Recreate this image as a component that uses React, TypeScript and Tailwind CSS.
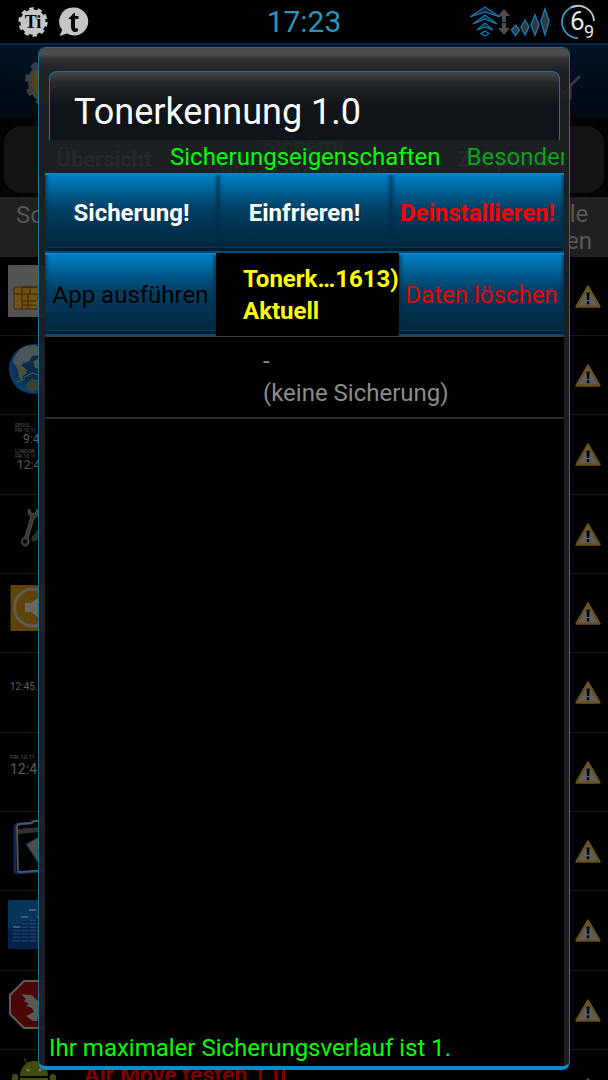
import type { ReactNode } from "react";
import { clsx } from "clsx";

function TitaniumIcon() {
    return (
        <svg className="w-[30px] h-[30px]" viewBox="0 0 30 30">
            <circle cx="15" cy="15" r="12.6" fill="#c3c5c6" />
            <circle cx="15" cy="15" r="13" fill="none" stroke="#c3c5c6" strokeWidth="3.400" strokeDasharray="4.4 3.768" />
            <text x="15" y="21" textAnchor="middle" fontFamily="Liberation Serif, serif" fontWeight="bold" fontSize="18" fill="#050505">Ti</text>
        </svg>
    )
}

function ChatIcon() {
    return (
        <svg className="w-[30px] h-[30px]" viewBox="0 0 30 30">
            <path d="M15 .5a14 14 0 1 1-7 26L.5 29l2.6-6A14 14 0 0 1 15 .5Z" fill="#c3c5c6" />
            <path d="m15 6-6 6h3v8c0 5 4.500 6 7 4v-3c-2 1-3 .5-3-1v-8h3.500V9H16V6Z" fill="#050505" />
        </svg>
    )
}

function WifiIcon() {
    return (
        <svg className="w-[42px] h-[32px]" viewBox="0 0 42 32" fill="none" stroke="#1878ad" strokeWidth="1.300">
            <path d="M2 11 17 1l15 10-15-5Z" fill="#123" />
            <path d="M5 18 17 9l12 9-12-5Z" fill="#123" />
            <path d="M9 24l8-7 8 7-8-3Z" fill="#123" />
            <path d="m17 25 4 2.500-4 2.500-4-2.500Z" />
            <path d="m36 3 6 7h-4v6h-4v-6h-4Zm0 26 6-7h-4v-5h-4v5h-4Z" fill="#4b4d4f" stroke="none" />
        </svg>
    )
}

function SignalIcon() {
    return (
        <svg className="w-10 h-[30px]" viewBox="0 0 40 30" fill="#34383b" stroke="#1878ad" strokeWidth="1.400">
            <path d="m5.500 18 4 5-4 5.500-4-5.500Z" />
            <path d="m15 13 4 7-4 8-4-8Z" />
            <path d="m25 8 4 10-4 10-4-10Z" />
            <path d="m35 2 4 12-4 14-4-14Z" />
        </svg>
    )
}

function BatteryRing() {
    return (
        <div className="relative w-9 h-9 text-[#e6e6e6] leading-none">
            <svg className="w-9 h-9" viewBox="0 0 36 36" fill="none" strokeWidth="1.800">
                <path d="M18 34A16 16 0 0 1 18 2" stroke="#2b9cc9" />
                <path d="M11 3.500A16 16 0 0 1 34 17" stroke="#b9c6cc" />
            </svg>
            <span className="absolute left-[10px] top-[5px] text-[26px] leading-6">6</span>
            <span className="absolute left-[24px] top-[18px] text-lg leading-5">9</span>
        </div>
    )
}

function StatusBar() {
    return (
        <header className="grid grid-cols-3 items-center h-[43px] px-3 bg-black">
            <div className="flex gap-[11px] pl-[6px]">
                <TitaniumIcon />
                <ChatIcon />
            </div>
            <time className="text-center text-[30px] leading-9 text-[#2d93bd]">17:23</time>
            <div className="flex items-center justify-end">
                <WifiIcon />
                <SignalIcon />
                <span className="w-[10px]"></span>
                <BatteryRing />
            </div>
        </header>
    )
}

function WarningIcon() {
    return (
        <svg className="w-[26px] h-[23px]" viewBox="0 0 26 23">
            <path d="M13 1.500 24.500 21.500h-23Z" fill="#5e5e5e" stroke="#6b5018" strokeWidth="2.400" strokeLinejoin="round" />
            <path d="M11.500 7.500h3.200l-.5 7.500h-2.200ZM11.800 16.200h2.500v3h-2.500Z" fill="#050505" />
        </svg>
    )
}

function SimIcon() {
    return (
        <svg className="w-[50px] h-[52px]" viewBox="0 0 50 52">
            <rect width="46" height="52" rx="1" fill="#535353" />
            <rect x="6" y="22" width="36" height="22" rx="1" fill="#715014" stroke="#3d2c0b" />
            <path d="M14 22v7H7m7-7h15m-15 7h28M20 29v15m-6-15v15m0-8h15m-7-14v7m8 0v7m-16 4h15" stroke="#3d2408" fill="none" />
            <path d="m31 31 3-4 5 1 3 4v12l-7 1-4-4-4-2 3-5Z" fill="#5a5a5a" />
        </svg>
    )
}

function GlobeIcon() {
    return (
        <svg className="w-[50px] h-[50px]" viewBox="0 0 50 50">
            <defs>
                <radialGradient id="globe" cx="0.5" cy="0.45">
                    <stop offset="0.6" stopColor="#0c2a4a" />
                    <stop offset="1" stopColor="#0a3c66" />
                </radialGradient>
            </defs>
            <circle cx="26" cy="25" r="25" fill="url(#globe)" />
            <path d="m7 12 5-7 6-3 9-1 8 4-4 6-7 1-3 5-6 1-3 5-5-2-2-4Z" fill="#4a5558" />
            <path d="m8 22 5-1 5 4 1 4-4 3-1 5-3-3-1-6Z" fill="#47513e" />
            <path d="m25 17 8-3 6 5-4 6-8-1Z" fill="#4d5450" />
            <path d="m18 40 6-5 5 1 6-1-2 10-8 3-6-2Z" fill="#34423a" />
            <path d="m5 18 8 2 7-3m-4 16 9-4 8 3M9 38l8-3" stroke="#4a5a66" fill="none" />
        </svg>
    )
}

function DualClock() {
    return (
        <div className="flex flex-col pl-[7px] w-[46px] text-[#5c5c5c]">
            <span className="text-[5px] leading-[5px]">SEOUL<br />FRI 10.11</span>
            <span className="text-xs leading-3 pl-2">9:45</span>
            <span className="text-[5px] leading-[5px] pt-1">LONDON<br />FRI 10.11</span>
            <span className="text-xs leading-3 pl-[2px]">12:45</span>
        </div>
    )
}

function WrenchIcon() {
    return (
        <svg className="w-[50px] h-[50px]" viewBox="0 0 50 50">
            <path d="M21 6c-2 4 0 6 2 8l-6 20c-4 1-5 8 0 9 4 0 5-5 3-8l6-20c4-1 5-5 3-9l-2 5-4-1Z" fill="#343638" stroke="#555" strokeWidth="1" />
            <circle cx="17" cy="38.500" r="2" fill="#000" />
            <path d="m37 16-10 16c-4 1-4 6-1 6s4-3 3-6l11-14Z" fill="#292b2c" stroke="#3c3c3c" />
        </svg>
    )
}

function SpeakerIcon() {
    return (
        <svg className="w-[50px] h-[50px]" viewBox="0 0 50 50">
            <rect x="2.500" y="3" width="46" height="46" fill="#60430a" />
            <circle cx="25" cy="25.500" r="18.500" fill="none" stroke="#5e5b52" strokeWidth="3" />
            <path d="M17 21h6l8-6v21l-8-6h-6Z" fill="#686662" />
        </svg>
    )
}

function BatteryBoxIcon() {
    return (
        <svg className="w-[50px] h-[54px]" viewBox="0 0 50 54" fill="none">
            <path d="m11 4 12-1 2-3 7 0 2 3 12 1-3 46-33 3c-2 0-3-1-3-3L7 8c0-3 1-4 4-4Z" stroke="#092b62" strokeWidth="3" />
            <path d="m12 4 12-1 2-2h6l2 3 12 1-3 45-31 2c-2 0-2-1-2-3L9 8c0-3 1-4 3-4Z" stroke="#565656" strokeWidth="1.800" />
            <path d="m10 9 34-3v5l-34 3Z" fill="#303030" />
            <path d="m31 17-13 7 13 20 8-4-9-8 1-8Z" fill="#4c4c4c" stroke="#092b62" />
        </svg>
    )
}

const bars = [
    { x: 5, top: 27, n: 6 },
    { x: 13, top: 17, n: 8 },
    { x: 21, top: 10, n: 9 },
    { x: 29, top: 17, n: 8 },
];

function EqualizerIcon() {
    return (
        <svg className="w-[50px] h-[50px]" viewBox="0 0 50 50">
            <rect y="1" width="49" height="49" rx="2" fill="#042349" />
            <path d="M2 1h45a2 2 0 0 1 2 2v16C32 17 14 22 0 30V3a2 2 0 0 1 2-2Z" fill="#06345a" />
            {bars.map((bar) => (
                <g key={bar.x}>
                    <rect x={bar.x} y={bar.top} width="7" height="2" fill="#41616b" />
                    {Array.from({ length: bar.n - 2 }, (_, i) => (
                        <rect key={i} x={bar.x} y={41 - i * 3.4} width="7" height="1.500" fill="#174668" />
                    ))}
                </g>
            ))}
        </svg>
    )
}

function StopBirdIcon() {
    return (
        <svg className="w-[52px] h-[50px]" viewBox="0 0 52 50">
            <path d="M16 2h20l14 14v19L36 49H16L2 35V16Z" fill="#4b0505" stroke="#5d5d5d" strokeWidth="2" />
            <path d="M11 15c5 1 7 0 9 1 5-1 7 4 10 6V8l7 3v14l-6 8-2 9-4 0-7-5 8-4-2-4-6-2 3-2-5-3 2-2-4-4Z" fill="#595959" />
        </svg>
    )
}

function AndroidIcon() {
    return (
        <svg className="w-[52px] h-[50px]" viewBox="0 0 52 50" fill="#414d0c">
            <path d="M12 18a14 15 0 0 1 28 0Z" />
            <path d="m19 6-3-6m17 6 3-6" stroke="#414d0c" />
            <rect x="12" y="20" width="28" height="24" />
            <rect x="4" y="16" width="6" height="20" rx="3" />
            <rect x="42" y="16" width="6" height="20" rx="3" />
            <circle cx="20" cy="12" r="1.500" fill="#777" />
            <circle cx="32" cy="12" r="1.500" fill="#777" />
        </svg>
    )
}

function AppRow({ icon, children }: { icon: ReactNode; children?: ReactNode }) {
    return (
        <li className="flex justify-between items-center h-[79px] nth-[3n]:h-20 pl-2 pr-[7px] border-b border-[#15191a]">
            <div className="self-start pt-2 shrink-0">{icon}</div>
            {children}
            <WarningIcon />
        </li>
    )
}

function BackgroundApp() {
    return (
        <div className="flex flex-col">
            <div className="flex items-center h-[75px] px-6 border-t-2 border-[#04284a] bg-linear-to-b from-[#021426] to-[#010812]">
                <svg className="w-[50px] h-[50px]" viewBox="0 0 50 50">
                    <circle cx="26" cy="25" r="20" fill="#5c450c" stroke="#3d3f40" strokeWidth="4" />
                    <circle cx="26" cy="25" r="23" fill="none" stroke="#3d3f40" strokeWidth="4" strokeDasharray="7 7.450" />
                    <text x="18" y="33" fontFamily="Liberation Serif, serif" fontWeight="bold" fontSize="24" fill="#0a3a5e">Ti</text>
                </svg>
                <span className="grow pl-6 text-3xl text-[#2c2f30]">ALLE (System)</span>
                <svg className="w-10 h-10" viewBox="0 0 40 40" fill="none" stroke="#38393a" strokeWidth="3">
                    <path d="M26 4H2v32h24V24M12 24l7 7 17-17" />
                </svg>
            </div>
            <div className="pt-2 pb-1 px-1 bg-[#030303]">
                <div className="grid grid-cols-3 items-center h-[67px] rounded-[18px] bg-[#131313] text-center text-[22px] font-bold text-[#8a8a8a]">
                    <span>Übersicht</span>
                    <span className="leading-7 text-[#1a8a20]">Sichern/<br />Wiederherstellen</span>
                    <span>Zeitpläne</span>
                </div>
            </div>
            <div className="flex justify-between h-[60px] px-4 bg-[#20211f] text-2xl text-[#575757]">
                <span className="leading-9">Sortieren</span>
                <span className="leading-[27px] pt-1 text-center">Bearbeite alle<br />Anwendungen</span>
            </div>
            <ul>
                <AppRow icon={<SimIcon />} />
                <AppRow icon={<GlobeIcon />} />
                <AppRow icon={<DualClock />} />
                <AppRow icon={<WrenchIcon />} />
                <AppRow icon={<SpeakerIcon />} />
                <AppRow icon={<span className="block pl-[2px] pt-[18px] text-[10px] leading-4 text-[#5c5c5c]">12:45...</span>} />
                <AppRow
                    icon={
                        <div className="pl-[2px] pt-3 w-[50px] text-[#5c5c5c]">
                            <div className="text-[6px] leading-2">FRI 10.11</div>
                            <div className="text-sm leading-4">12:45</div>
                        </div>
                    }
                />
                <AppRow icon={<BatteryBoxIcon />} />
                <AppRow icon={<EqualizerIcon />} />
                <AppRow icon={<StopBirdIcon />} />
                <AppRow icon={<AndroidIcon />}>
                    <span className="grow self-start pt-3 pl-6 text-[23px] leading-7 font-bold text-[#7a0000]">Air Move testen 1.0</span>
                </AppRow>
            </ul>
        </div>
    )
}

const glossy = "bg-linear-to-b from-[#0080c4] via-[#003f62] via-45% to-[#00263a] border-t-2 border-t-[#0a84c4] border-b-2 border-b-[#004c74] shadow-[inset_5px_0_4px_-4px_#002a44,inset_-5px_0_4px_-4px_#002a44,inset_0_-4px_0_-1px_#001a2b,inset_0_-5px_0_-1px_#003d5e]";

function GlossyButton({ className, children }: { className?: string; children: ReactNode }) {
    return (
        <button className={clsx("flex justify-center items-center text-2xl whitespace-nowrap cursor-pointer", glossy, className)}>
            {children}
        </button>
    )
}

function Dialog() {
    return (
        <section
            role="dialog"
            aria-labelledby="dialog-title"
            className="absolute inset-x-[38px] top-[47px] bottom-[10px] flex flex-col pl-[6px] pr-[5px] rounded-lg border border-[#226e90] border-b-4 border-b-[#0b8bcb] bg-[#1d2125]/93 overflow-hidden"
        >
            <div className="-mx-[6px] h-[23px] shrink-0 bg-linear-to-b from-[#4b4c4e] from-30% via-[#2f3235] via-45% to-[#1d2226]"></div>
            <div className="mx-1 h-[69px] shrink-0 flex items-center rounded-t-lg border border-b-0 border-[#26708f] bg-linear-to-b from-[#454548] via-[#25282a] via-16% to-[#0e1417] to-50% pl-6">
                <h1 id="dialog-title" className="pt-3 text-4xl text-white">Tonerkennung 1.0</h1>
            </div>
            <nav className="flex gap-[26px] h-[33px] shrink-0 pl-[125px] text-2xl leading-[34px] whitespace-nowrap overflow-hidden">
                <a href="#eigenschaften" className="text-[#00ff00]">Sicherungseigenschaften</a>
                <a href="#besonderheiten" className="text-[#0ea01a]">Besonderheiten</a>
            </nav>
            <div className="grow bg-black">
                <div className="grid grid-cols-3 h-20">
                    <GlossyButton className="font-bold text-white">Sicherung!</GlossyButton>
                    <GlossyButton className="font-bold text-white">Einfrieren!</GlossyButton>
                    <GlossyButton className="font-bold text-[#ff0000]">Deinstallieren!</GlossyButton>
                </div>
                <div className="grid grid-cols-[171fr_183fr_165fr] h-[83px]">
                    <GlossyButton className="text-black">App ausführen</GlossyButton>
                    <div className="flex flex-col justify-center pl-[27px] text-2xl leading-8 font-bold text-[#ffff00] whitespace-nowrap">
                        <span>Tonerk…1613)</span>
                        <span>Aktuell</span>
                    </div>
                    <GlossyButton className="text-[#f00000]">Daten löschen</GlossyButton>
                </div>
                <div className="pl-[42%] py-2 border-t border-b-2 border-t-[#3c3c3c] border-b-[#2c2c2c] text-2xl leading-8 text-[#8b8b8b]">
                    <p>-</p>
                    <p>(keine Sicherung)</p>
                </div>
            </div>
            <p className="px-1 pb-[2px] bg-black text-2xl leading-8 text-[#00ff00]">Ihr maximaler Sicherungsverlauf ist 1.</p>
        </section>
    )
}

export default function App() {
    return (
        <main className="relative h-screen overflow-hidden bg-black font-[Roboto,sans-serif]">
            <StatusBar />
            <BackgroundApp />
            <Dialog />
        </main>
    )
}
